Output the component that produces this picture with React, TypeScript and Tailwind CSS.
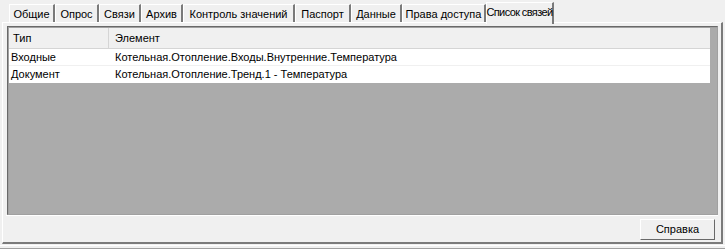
import React from 'react'

const tabs = [
  { name: 'Общие', w: 46 },
  { name: 'Опрос', w: 44 },
  { name: 'Связи', w: 42 },
  { name: 'Архив', w: 42 },
  { name: 'Контроль значений', w: 112 },
  { name: 'Паспорт', w: 56 },
  { name: 'Данные', w: 51 },
  { name: 'Права доступа', w: 84 },
]

const rows = [
  { type: 'Входные', el: 'Котельная.Отопление.Входы.Внутренние.Температура' },
  { type: 'Документ', el: 'Котельная.Отопление.Тренд.1 - Температура' },
]

function App() {
  return (
    <div
      className="w-[725px] h-[249px] bg-[#f0f0f0] text-[11px] text-black leading-none overflow-hidden relative whitespace-nowrap"
      style={{ fontFamily: '"Liberation Sans", Arial, sans-serif' }}
    >
      {/* tab strip */}
      <div className="flex items-end h-[23px] pl-[9px]">
        {tabs.map(t => (
          <div
            key={t.name}
            className="h-[19px] flex items-center justify-center border-t border-l border-white border-r-2 border-r-[#7a7a7a] shrink-0"
            style={{ width: t.w }}
          >
            {t.name}
          </div>
        ))}
        <div className="relative z-10 w-[68px] h-[22px] mb-[-1px] flex items-center justify-center bg-[#f0f0f0] border-t border-l border-white border-r-2 border-r-[#7a7a7a] pb-[2px] shrink-0 tracking-[-0.6px]">
          Список связей
        </div>
      </div>

      {/* page */}
      <div className="absolute left-[2px] top-[22px] w-[721px] h-[222px] border-t border-l border-white border-r-2 border-b-2 border-r-[#7a7a7a] border-b-[#7a7a7a] flex flex-col px-[3px] pt-[3px] pb-[1px]">
        {/* list view */}
        <div className="flex-1 border border-[#a0a0a0] border-t-[#696969] border-l-[#696969] bg-[#ababab] flex flex-col ml-[1px]">
          <div className="flex-1 border-t border-l border-[#a0a0a0] flex flex-col">
            <div className="w-[701px] bg-white">
              <div className="flex h-[21px] bg-[#f0f0f0] border-b border-[#d5d5d5]">
                <div className="w-[100px] flex items-center pl-[4px] border-r border-[#d5d5d5]">Тип</div>
                <div className="flex-1 flex items-center pl-[6px]">Элемент</div>
              </div>
              {rows.map((r, i) => (
                <div key={i} className={'flex h-[17px] ' + (i === 0 ? 'border-b border-[#f0f0f0]' : '')}>
                  <div className="w-[100px] flex items-center pl-[2px]">{r.type}</div>
                  <div className="flex-1 flex items-center pl-[6px]">{r.el}</div>
                </div>
              ))}
            </div>
          </div>
        </div>
        {/* bottom bar */}
        <div className="h-[26px] flex items-end justify-end pr-[3px] pb-[1px] border-t border-white">
          <button className="w-[75px] h-[21px] bg-[#f0f0f0] border border-white border-r-[#696969] border-b-[#696969] flex items-center justify-center">
            Справка
          </button>
        </div>
      </div>

      {/* outer frame */}
      <div className="absolute left-0 right-0 bottom-0 h-[4px] border-t border-white border-b border-b-[#a0a0a0]" />
    </div>
  )
}

export default App
